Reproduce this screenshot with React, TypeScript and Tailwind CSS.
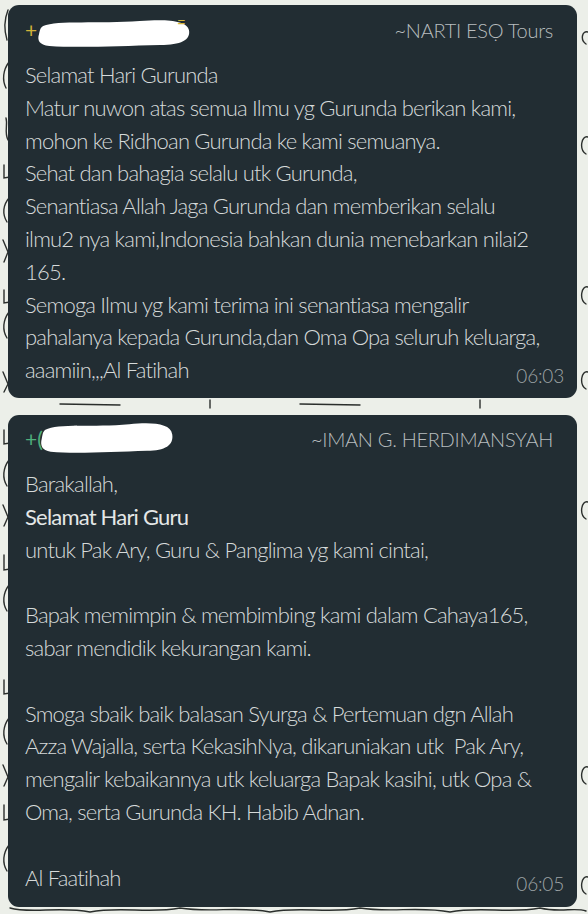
import React from "react";

const font = { fontFamily: "Lato, 'Noto Sans', sans-serif" };

function Blob({ className }: { className: string }) {
  return (
    <svg className={className} viewBox="0 0 150 30" preserveAspectRatio="none">
      <path
        d="M6 8 C 20 2, 60 6, 100 3 C 125 1, 146 2, 148 12 C 150 22, 140 27, 120 27 C 80 28, 40 30, 12 28 C 2 27, 0 22, 2 16 C 3 12, 3 10, 6 8 Z"
        fill="#ffffff"
      />
    </svg>
  );
}

function Wallpaper() {
  const marks = [
    "M8 10 C 4 20, 4 30, 7 40",
    "M9 62 C 3 70, 2 80, 6 88",
    "M6 118 C 8 125, 4 132, 8 140",
    "M4 165 L 4 178 L 10 177",
    "M9 198 C 3 205, 2 214, 7 222",
    "M3 240 L 8 252 L 4 262",
    "M4 290 L 4 303 L 10 302",
    "M9 312 C 3 320, 2 330, 7 338",
    "M3 372 L 8 384 L 4 392",
    "M4 430 L 4 444 L 10 443",
    "M9 460 C 3 468, 2 478, 7 486",
    "M3 505 L 8 517 L 4 526",
    "M4 555 L 4 570 L 10 569",
    "M9 585 C 3 593, 2 603, 7 611",
    "M4 680 L 4 694 L 10 693",
    "M9 718 C 3 726, 2 736, 7 744",
    "M3 765 L 8 777 L 4 786",
    "M4 805 L 4 820 L 10 819",
    "M9 845 C 3 853, 2 863, 7 871",
    "M588 32 C 582 30, 580 40, 586 44",
    "M588 137 C 581 135, 579 150, 586 154",
    "M588 287 C 581 285, 579 300, 586 304",
    "M588 372 C 581 370, 579 385, 586 389",
    "M588 502 C 581 500, 579 515, 586 519",
    "M588 767 C 581 765, 579 780, 586 784",
    "M588 877 C 581 875, 579 890, 586 894",
    "M210 400 L 210 408",
    "M480 400 L 480 408",
    "M60 404 L 120 405",
    "M300 404 L 360 405",
    "M10 908 C 30 914, 60 906, 90 912 C 120 906, 150 914, 180 908 C 210 913, 240 906, 270 912 C 300 906, 330 914, 360 908 C 390 913, 420 906, 450 912 C 480 906, 510 914, 540 908 C 560 913, 575 907, 586 911",
  ];
  return (
    <svg className="absolute inset-0 w-full h-full" viewBox="0 0 588 914">
      {marks.map((d, i) => (
        <path key={i} d={d} fill="none" stroke="#2b2f2d" strokeWidth="1.4" strokeLinecap="round" />
      ))}
    </svg>
  );
}

function Bubble({
  plus,
  plusColor,
  name,
  lines,
  time,
  blobClass,
  tail,
  className,
}: {
  plus: string;
  plusColor: string;
  name: string;
  lines: { t: string; strong?: boolean }[];
  time: string;
  blobClass: string;
  tail?: boolean;
  className: string;
}) {
  return (
    <div className={`relative bg-[#222d33] rounded-[11px] pl-[17px] pr-[13px] ${className}`}>
      <div className="flex items-center justify-between h-[30px] pr-[11px]">
        <span className={`text-[21px] ${plusColor}`}>{plus}</span>
        <span className="text-[20px] font-light text-[#b8bdbf] tracking-[-0.3px]">{name}</span>
      </div>
      <Blob className={blobClass} />
      {tail && <span className="absolute left-[169px] top-[10px] text-[15px] leading-none text-[#d2b43a]">=</span>}
      <div className="mt-[14px] text-[22px] font-light text-[#d6dada] leading-[32.8px] tracking-[-0.8px]">
        {lines.map((l, i) =>
          i === lines.length - 1 ? (
            <div key={i} className="flex justify-between whitespace-pre">
              <span>{l.t}</span>
              <span className="text-[19px] text-[#9ea4a6] translate-y-[6px] tracking-[-0.2px]">{time}</span>
            </div>
          ) : (
            <div
              key={i}
              className={`whitespace-pre h-[32.8px] ${l.strong ? "font-normal text-[#e4e7e7]" : ""}`}
            >
              {l.t}
            </div>
          )
        )}
      </div>
    </div>
  );
}

export default function App() {
  const first = [
    { t: "Selamat Hari Gurunda" },
    { t: "Matur nuwon atas semua Ilmu yg Gurunda berikan kami," },
    { t: "mohon ke Ridhoan Gurunda ke kami semuanya." },
    { t: "Sehat dan bahagia selalu utk Gurunda," },
    { t: "Senantiasa Allah Jaga Gurunda dan memberikan selalu" },
    { t: "ilmu2 nya kami,Indonesia bahkan dunia menebarkan nilai2" },
    { t: "165." },
    { t: "Semoga Ilmu yg kami terima ini senantiasa mengalir" },
    { t: "pahalanya kepada Gurunda,dan Oma Opa seluruh keluarga," },
    { t: "aaamiin,,,Al Fatihah" },
  ];
  const second = [
    { t: "Barakallah," },
    { t: "Selamat Hari Guru", strong: true },
    { t: "untuk Pak Ary, Guru & Panglima yg kami cintai," },
    { t: " " },
    { t: "Bapak memimpin & membimbing kami dalam Cahaya165," },
    { t: "sabar mendidik kekurangan kami." },
    { t: " " },
    { t: "Smoga sbaik baik balasan Syurga & Pertemuan dgn Allah" },
    { t: "Azza Wajalla, serta KekasihNya, dikaruniakan utk  Pak Ary," },
    { t: "mengalir kebaikannya utk keluarga Bapak kasihi, utk Opa &" },
    { t: "Oma, serta Gurunda KH. Habib Adnan." },
    { t: " " },
    { t: "Al Faatihah" },
  ];
  return (
    <div className="relative w-[588px] h-[914px] overflow-hidden bg-[#ecefe9]" style={font}>
      <Wallpaper />
      <div className="relative flex flex-col gap-[17px] pt-[5px] pl-[8px] pr-[11px]">
        <Bubble
          plus="+"
          plusColor="text-[#d2b43a]"
          name="~NARTI ESỌ Tours"
          lines={first}
          time="06:03"
          tail
          blobClass="absolute left-[29px] top-[13px] w-[154px] h-[30px]"
          className="pt-[10px] pb-[14px] h-[393px]"
        />
        <Bubble
          plus="+("
          plusColor="text-[#4fb07c]"
          name="~IMAN G. HERDIMANSYAH"
          lines={second}
          time="06:05"
          blobClass="absolute left-[32px] top-[6px] w-[134px] h-[33px]"
          className="pt-[9px] pb-[14px] h-[492px]"
        />
      </div>
    </div>
  );
}
